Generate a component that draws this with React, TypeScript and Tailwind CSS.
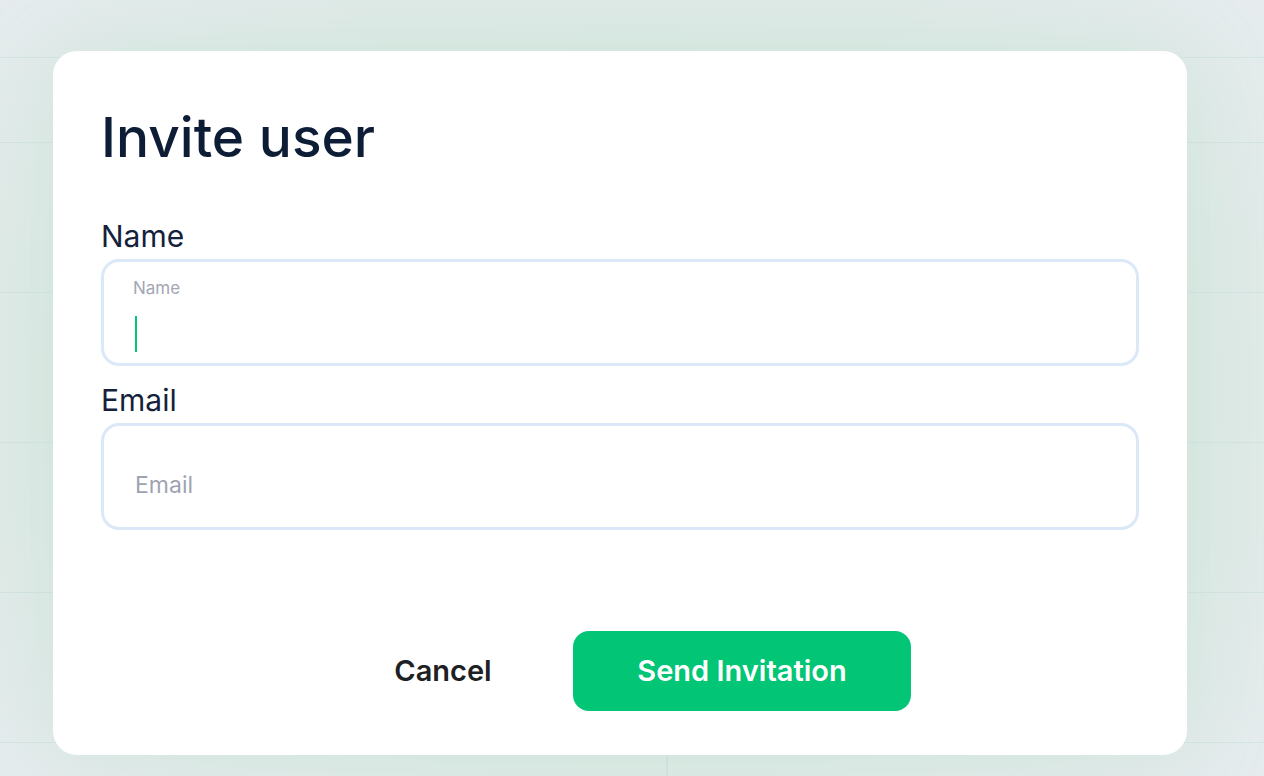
import React from "react";

const font = { fontFamily: "Inter, 'Noto Sans', Arial, sans-serif" };

const BackgroundRows: React.FC = () => (
  <div className="flex flex-col">
    <div className="h-[58px] border-b border-[#d3e3e2]" />
    <div className="h-[85px] border-b border-[#d3e3e2]" />
    <div className="h-[150px] border-b border-[#d3e3e2]" />
    <div className="h-[150px] border-b border-[#d3e3e2]" />
    <div className="h-[150px] border-b border-[#d3e3e2]" />
    <div className="h-[150px] border-b border-[#d3e3e2]" />
    <div className="flex h-[60px]">
      <div className="w-[668px] border-r-2 border-[#d3e3e2]" />
      <div className="flex-1" />
    </div>
  </div>
);

export default function App() {
  return (
    <div
      className="relative h-[776px] w-[1264px] overflow-hidden bg-[radial-gradient(ellipse_at_center,#d8e9e1_0%,#dbe9e3_55%,#e6ecee_100%)]"
      style={font}
    >
      <BackgroundRows />

      {/* Dialog */}
      <div className="absolute left-[53px] top-[51px] flex h-[704px] w-[1134px] flex-col rounded-[24px] bg-white px-12 pb-[44px] pt-[59px] shadow-[0_0_80px_rgba(160,210,185,0.25)]">
        <h1 className="text-[55px] font-medium leading-none text-[#0d1d35]">
          Invite user
        </h1>

        <label className="mt-[56px] text-[30px] leading-none text-[#14213a]">
          Name
        </label>
        <div className="mt-[8px] flex h-[107px] flex-col rounded-[18px] border-[3px] border-[#dbe8f8] px-[29px] pt-[18px]">
          <span className="text-[17px] leading-none text-[#a3a6b4]">Name</span>
          <div className="ml-[2px] mt-[19px] h-[36px] w-[2px] bg-[#02c575]" />
        </div>

        <label className="mt-[19px] text-[30px] leading-none text-[#14213a]">
          Email
        </label>
        <div className="mt-[8px] flex h-[107px] items-center rounded-[18px] border-[3px] border-[#dbe8f8] px-[31px] pt-[17px]">
          <span className="text-[23px] leading-none text-[#9ea3b1]">Email</span>
        </div>

        <div className="mt-auto flex items-center">
          <button className="ml-[292px] w-[100px] text-center text-[29px] font-semibold text-[#1e2124]">
            Cancel
          </button>
          <button className="ml-[80px] flex h-[80px] w-[338px] items-center justify-center rounded-[16px] bg-[#02c575] text-[29px] font-semibold text-white">
            Send Invitation
          </button>
        </div>
      </div>
    </div>
  );
}
